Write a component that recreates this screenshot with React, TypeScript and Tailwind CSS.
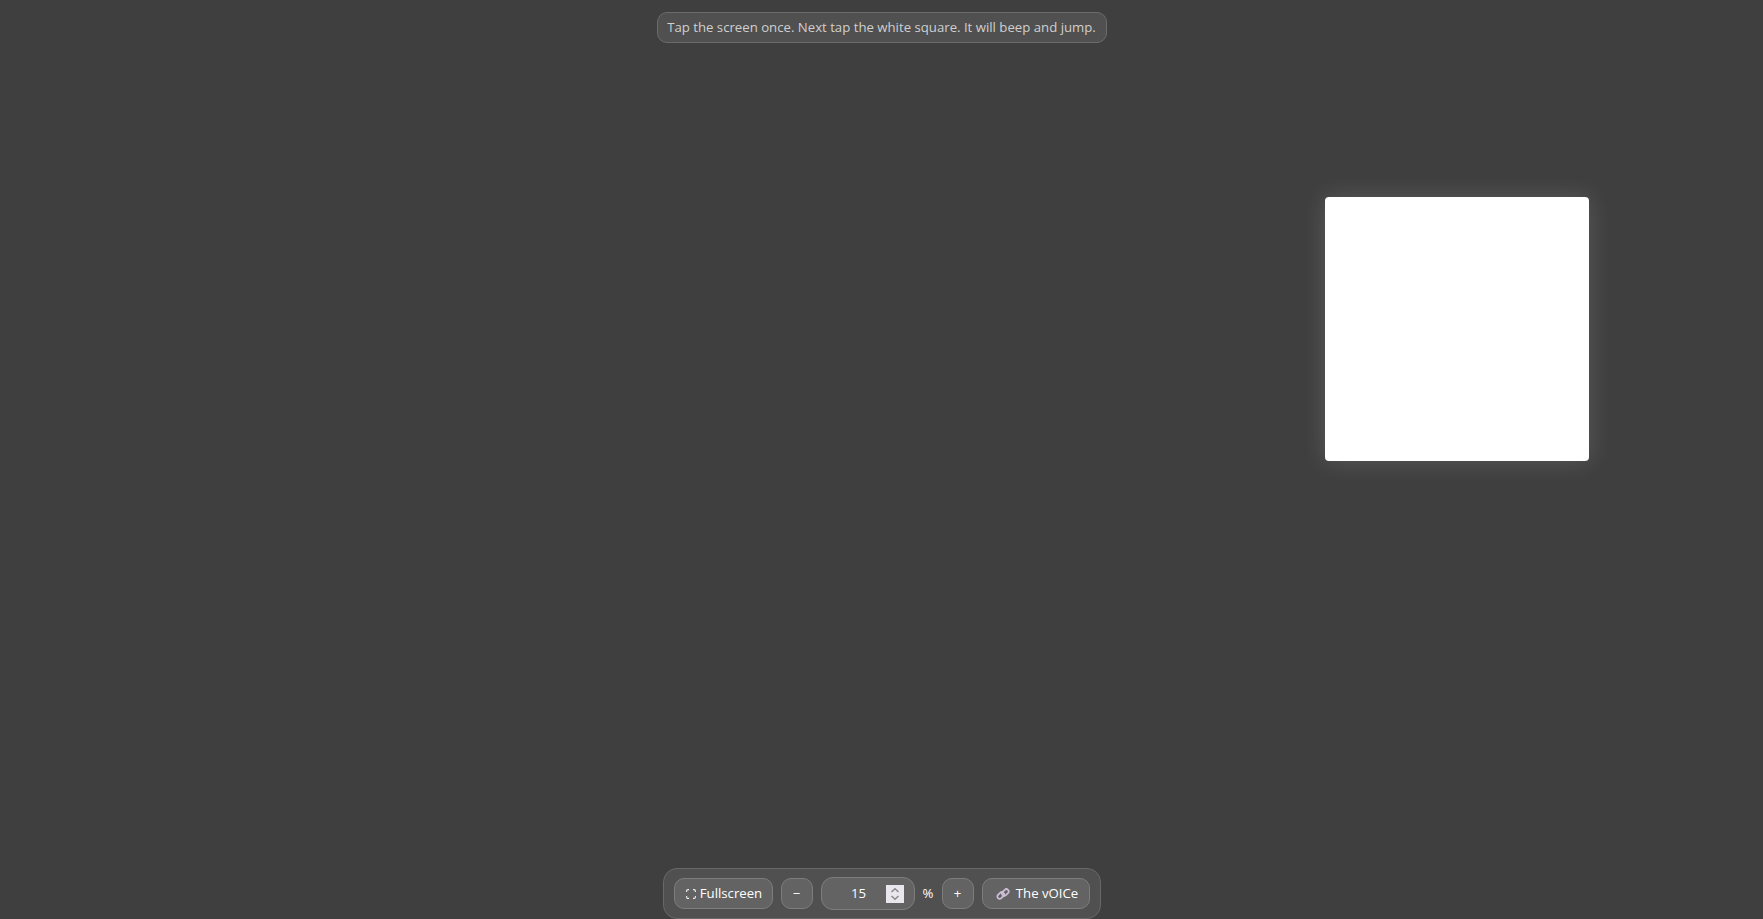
export default function App() {
  return (
    <div className="relative flex h-screen flex-col items-center justify-between overflow-hidden bg-[#3f3f3f] font-['Open_Sans','Noto_Sans',sans-serif] text-[13.2px] text-white">
      {/* Hint */}
      <div className="mt-3 flex h-[31px] w-[450px] items-center justify-center rounded-[10px] border border-[#6b6b6b] bg-[#505050] pt-px whitespace-nowrap text-[#cfcfcf]">
        Tap the screen once. Next tap the white square. It will beep and jump.
      </div>

      {/* Target, placed freely on the screen */}
      <div className="absolute top-[197px] left-[1325px] h-[264px] w-[264px] rounded-[4px] bg-white shadow-[0_0_24px_rgba(255,255,255,0.15)]" />

      {/* Toolbar */}
      <div className="flex h-[51px] w-[438px] items-center gap-2 rounded-[14px] border border-[#686868] bg-[#505050] pl-2.5">
        <button className="flex h-[31px] w-[99px] items-center justify-center gap-1 rounded-[10px] border border-[#7d7d7d] bg-[#636363] pt-px pl-[2px]">
          <svg width="10" height="10" viewBox="0 0 10 10" fill="none" stroke="#f0f0f0" strokeWidth="1.1">
            <path d="M.6 3V2A1.400 1.400 0 0 1 2 .6H3M7 .6h1A1.400 1.400 0 0 1 9.400 2V3M9.400 7v1A1.400 1.400 0 0 1 8 9.400H7M3 9.400H2A1.400 1.400 0 0 1 .6 8V7" />
          </svg>
          Fullscreen
        </button>
        <button className="flex h-[31px] w-8 items-center justify-center rounded-[10px] border border-[#7d7d7d] bg-[#636363] pt-px">−</button>
        <div className="flex h-[33px] w-[94px] items-center rounded-[12px] border border-[#7d7d7d] bg-[#636363] pr-2.5">
          <span className="flex-1 pt-px pl-2.5 text-center">15</span>
          <div className="flex h-[18px] w-[18px] items-center justify-center bg-[#e9e7ed]">
            <svg width="10" height="14" viewBox="0 0 10 14" fill="none" stroke="#8a8a8a" strokeWidth="1.5">
              <path d="M1.500 5L5 1.800L8.500 5M1.500 9L5 12.200L8.500 9" />
            </svg>
          </div>
        </div>
        <span className="w-[11px] pt-px text-center">%</span>
        <button className="flex h-[31px] w-8 items-center justify-center rounded-[10px] border border-[#7d7d7d] bg-[#636363] pt-px">+</button>
        <button className="flex h-[31px] w-[108px] items-center justify-center gap-[6px] rounded-[10px] border border-[#7d7d7d] bg-[#636363] pt-px pl-[3px]">
          <svg width="14" height="14" viewBox="0 0 14 14" fill="none" stroke="#cdbfd6" strokeWidth="1.700">
            <rect x="0.900" y="6.200" width="7.600" height="4.600" rx="2.300" transform="rotate(-45 4.700 8.500)" />
            <rect x="5.500" y="3.200" width="7.600" height="4.600" rx="2.300" transform="rotate(-45 9.300 5.500)" />
          </svg>
          The vOICe
        </button>
      </div>
    </div>
  );
}
